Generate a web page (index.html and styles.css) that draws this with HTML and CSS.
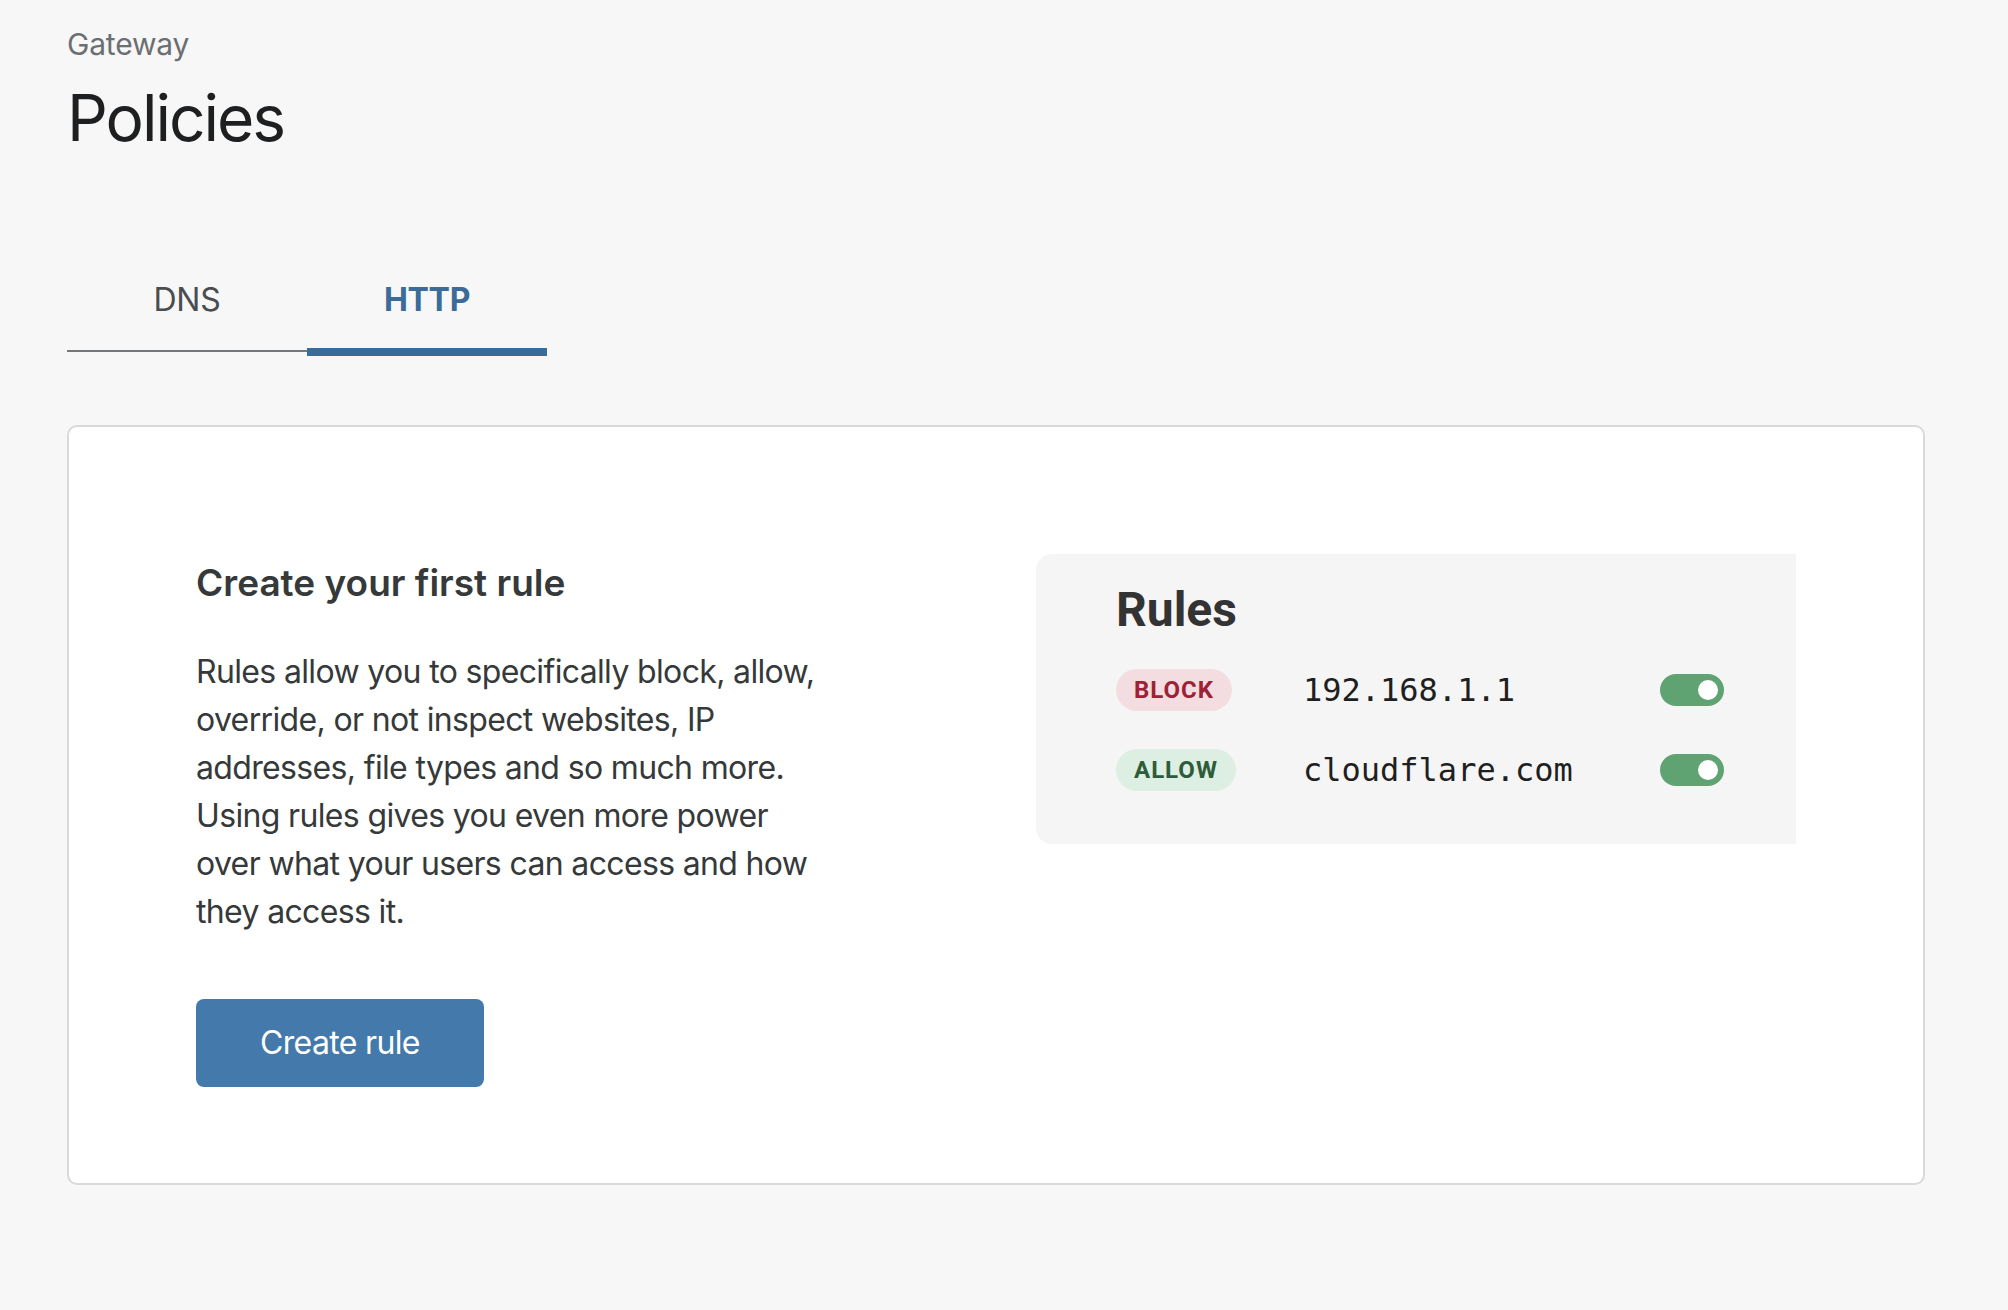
FILE: index.html
```html
<!DOCTYPE html>
<html lang="en">
<head>
<meta charset="utf-8">
<title>Policies - Gateway</title>
<link rel="stylesheet" href="styles.css">
</head>
<body>
<main class="page">
  <header class="page-header">
    <div class="eyebrow">Gateway</div>
    <h1 class="title">Policies</h1>
  </header>

  <nav class="tabs">
    <a class="tab">DNS</a>
    <a class="tab tab-active">HTTP</a>
  </nav>

  <section class="card">
    <div class="intro">
      <h2 class="intro-title">Create your first rule</h2>
      <p class="intro-text">Rules allow you to specifically block, allow, override, or not inspect websites, IP addresses, file types and so much more. Using rules gives you even more power over what your users can access and how they access it.</p>
      <button class="btn-primary">Create rule</button>
    </div>

    <div class="rules-preview">
      <h3 class="rules-title">Rules</h3>
      <div class="rule-row">
        <span class="badge badge-block">BLOCK</span>
        <span class="rule-value">192.168.1.1</span>
        <span class="toggle"><span class="toggle-knob"></span></span>
      </div>
      <div class="rule-row">
        <span class="badge badge-allow">ALLOW</span>
        <span class="rule-value">cloudflare.com</span>
        <span class="toggle"><span class="toggle-knob"></span></span>
      </div>
    </div>
  </section>
</main>
</body>
</html>
```

FILE: styles.css
```css
* { box-sizing: border-box; }

html, body {
  margin: 0;
  padding: 0;
  background: #f7f7f7;
}

body {
  font-family: Inter, "Noto Sans", "Liberation Sans", sans-serif;
  color: #36393a;
}

.page {
  padding: 26px 83px 0 67px;
}

.eyebrow {
  font-size: 30px;
  line-height: 36px;
  color: #6b6e72;
  letter-spacing: -0.2px;
}

.title {
  margin: 18px 0 0;
  font-size: 64px;
  line-height: 76px;
  font-weight: 400;
  color: #1d1f20;
  letter-spacing: -2px;
}

.tabs {
  display: flex;
  align-items: flex-start;
  margin-top: 93px;
}

.tab {
  width: 240px;
  padding: 27px 0 26px;
  text-align: center;
  font-size: 32px;
  line-height: 48px;
  color: #4a4d50;
  border-bottom: 2px solid #75787b;
  letter-spacing: -0.3px;
}

.tab-active {
  color: #3b6b98;
  font-weight: 700;
  padding-bottom: 24px;
  border-bottom: 8px solid #3b6b98;
  margin-bottom: -4px;
}

.card {
  margin-top: 73px;
  background: #ffffff;
  border: 2px solid #d9d9d9;
  border-radius: 10px;
  padding: 127px 127px 96px;
  display: grid;
  grid-template-columns: 1fr 1fr;
  column-gap: 80px;
  align-items: start;
}

.intro-title {
  margin: 6px 0 0;
  font-size: 37px;
  line-height: 46px;
  font-weight: 600;
  color: #36393a;
}

.intro-text {
  margin: 42px 0 0;
  max-width: 628px;
  font-size: 32px;
  line-height: 48px;
  letter-spacing: -0.65px;
  color: #36393a;
}

.btn-primary {
  margin-top: 63px;
  padding: 20px 64px;
  border: 0;
  border-radius: 8px;
  background: #447aab;
  color: #ffffff;
  font-family: inherit;
  font-size: 32px;
  line-height: 48px;
  letter-spacing: -0.65px;
}

.rules-preview {
  background: #f5f5f5;
  border-radius: 16px 0 0 16px;
  padding: 24px 72px 34px 80px;
  font-family: Roboto, "Liberation Sans", sans-serif;
}

.rules-title {
  margin: 0 0 8px;
  font-size: 48px;
  line-height: 64px;
  font-weight: 700;
  color: #333333;
}

.rule-row {
  display: grid;
  grid-template-columns: 187px 1fr 64px;
  align-items: center;
  height: 80px;
}

.badge {
  justify-self: start;
  height: 42px;
  padding: 0 18px;
  border-radius: 21px;
  font-size: 24px;
  line-height: 42px;
  font-weight: 700;
  letter-spacing: 1px;
}

.badge-block {
  background: #f3dde1;
  color: #9c2234;
}

.badge-allow {
  background: #ddeee2;
  color: #2d5c3a;
}

.rule-value {
  font-family: "DejaVu Sans Mono", "Liberation Mono", monospace;
  font-size: 32px;
  color: #1f1f1f;
}

.toggle {
  display: flex;
  align-items: center;
  justify-content: flex-end;
  width: 64px;
  height: 32px;
  padding-right: 6px;
  border-radius: 16px;
  background: #5fa372;
}

.toggle-knob {
  width: 20px;
  height: 20px;
  border-radius: 50%;
  background: #ffffff;
}
```
